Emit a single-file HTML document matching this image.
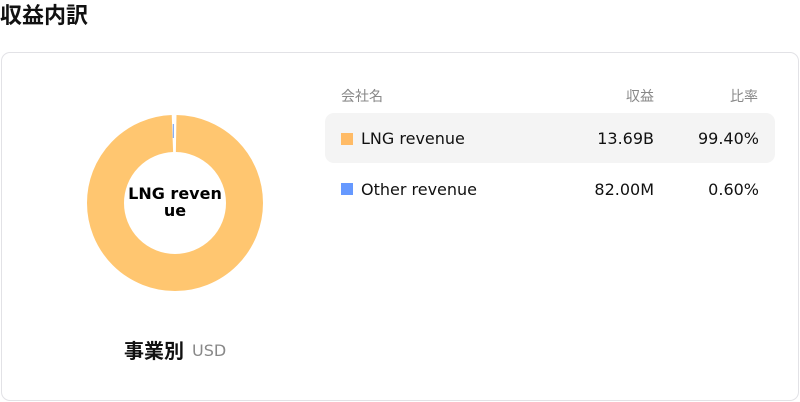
<!DOCTYPE html>
<html><head><meta charset="utf-8"><style>
*{margin:0;padding:0;box-sizing:border-box}
body{width:800px;height:402px;background:#fff;font-family:"DejaVu Sans","Noto Sans CJK JP",sans-serif;color:#111;position:relative;overflow:hidden}
.t{position:absolute;left:0;top:-2px;font-size:22px;font-weight:bold;font-family:"Noto Sans CJK JP",sans-serif}
.card{position:absolute;left:1px;top:52px;width:798px;height:349px;border:1px solid #e2e2e6;border-radius:9px}
.abs{position:absolute}
.hd{font-size:14px;color:#888;font-family:"Noto Sans CJK JP",sans-serif}
.row{font-size:16px}
.sq{position:absolute;width:12px;height:12px}
</style></head><body>
<div class="t">収益内訳</div>
<div class="card"></div>
<svg class="abs" style="left:0;top:0" width="800" height="402">
<circle cx="175" cy="203" r="69.5" fill="none" stroke="#ffc670" stroke-width="37" stroke-dasharray="432.7 4" stroke-dashoffset="-1.2" transform="rotate(-90 175 203)"/>
<line x1="173.3" y1="124" x2="173.3" y2="138" stroke="#6a9cf5" stroke-width="1"/>
<text x="175" y="199" text-anchor="middle" font-size="16" font-weight="bold" font-family="DejaVu Sans">LNG reven</text>
<text x="175" y="216" text-anchor="middle" font-size="16" font-weight="bold" font-family="DejaVu Sans">ue</text>
</svg>
<div class="abs" style="left:124px;top:335px;font-size:20px;font-weight:bold;font-family:'Noto Sans CJK JP',sans-serif">事業別</div>
<div class="abs" style="left:192px;top:341px;font-size:16px;color:#888">USD</div>
<div class="abs hd" style="left:341px;top:86px">会社名</div>
<div class="abs hd" style="left:626px;top:86px">収益</div>
<div class="abs hd" style="left:730px;top:86px">比率</div>
<div class="abs" style="left:325px;top:113px;width:450px;height:50px;background:#f4f4f4;border-radius:9px"></div>
<div class="sq" style="left:341px;top:133px;background:#ffbb66"></div>
<div class="abs row" style="left:361px;top:129px">LNG revenue</div>
<div class="abs row" style="right:146px;top:129px">13.69B</div>
<div class="abs row" style="right:41px;top:129px">99.40%</div>
<div class="sq" style="left:341px;top:183px;background:#6699ff"></div>
<div class="abs row" style="left:361px;top:180px">Other revenue</div>
<div class="abs row" style="right:146px;top:180px">82.00M</div>
<div class="abs row" style="right:41px;top:180px">0.60%</div>
</body></html>
